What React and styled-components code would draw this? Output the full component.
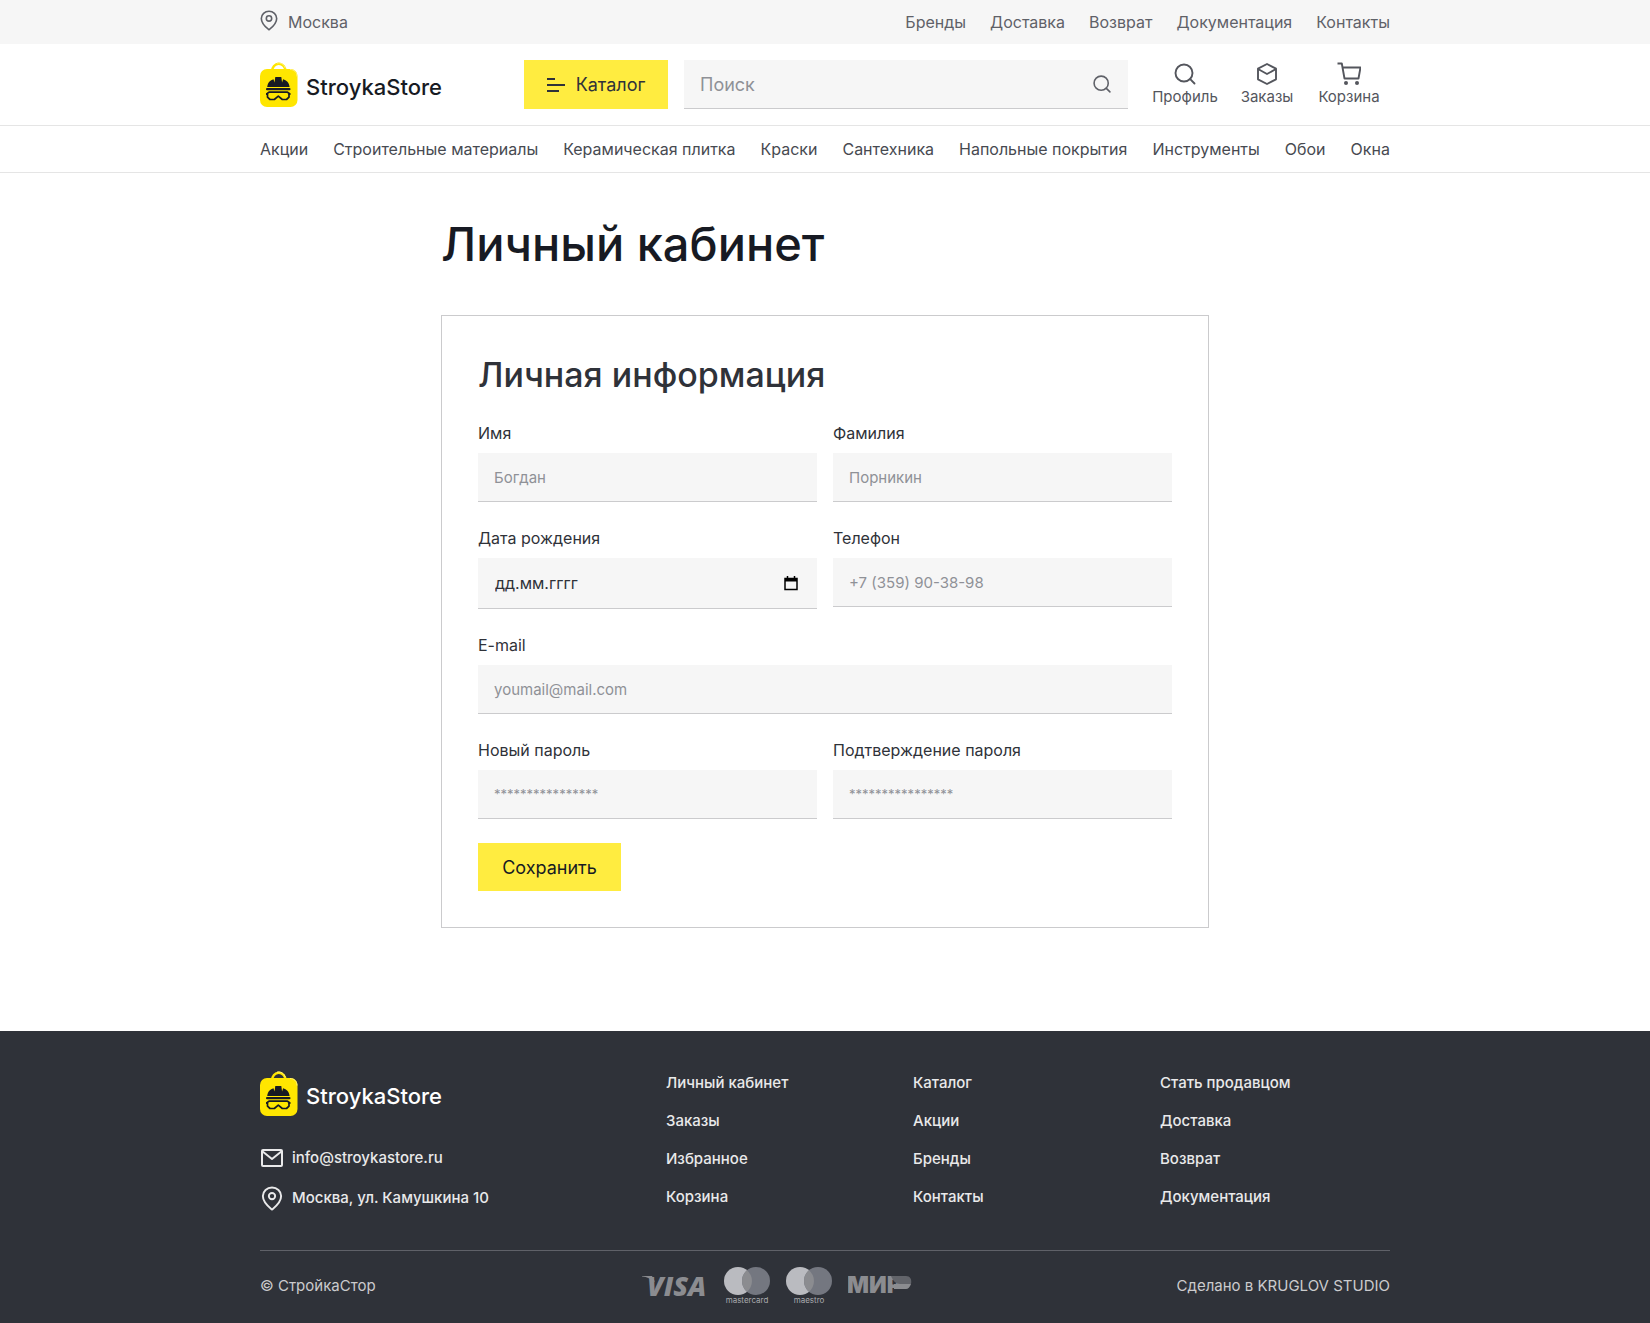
import React, { useState } from 'react';
import styled, { createGlobalStyle } from 'styled-components';

const topLinks = ['Бренды', 'Доставка', 'Возврат', 'Документация', 'Контакты'];

const categories = [
  'Акции',
  'Строительные материалы',
  'Керамическая плитка',
  'Краски',
  'Сантехника',
  'Напольные покрытия',
  'Инструменты',
  'Обои',
  'Окна',
];

const footerColumns = [
  ['Личный кабинет', 'Заказы', 'Избранное', 'Корзина'],
  ['Каталог', 'Акции', 'Бренды', 'Контакты'],
  ['Стать продавцом', 'Доставка', 'Возврат', 'Документация'],
];

const PinIcon = ({ width, height }) => (
  <svg width={width} height={height} viewBox="0 0 22 26" fill="none" stroke="currentColor" strokeWidth="2" strokeLinejoin="round">
    <path d="M11 24.500C8.500 22.500 1.500 17.500 1.500 10.500a9.500 9 0 0 1 19 0c0 7-7 12-9.500 14z" />
    <circle cx="11" cy="10.500" r="3.300" />
  </svg>
);

const SearchIcon = ({ size }) => (
  <svg width={size} height={size} viewBox="0 0 24 24" fill="none" stroke="currentColor" strokeWidth="1.900" strokeLinecap="round">
    <circle cx="11" cy="11" r="8.500" />
    <path d="M17.200 17.200L21.500 21.500" />
  </svg>
);

const BoxIcon = () => (
  <svg width="24" height="24" viewBox="0 0 24 24" fill="none" stroke="currentColor" strokeWidth="1.900" strokeLinejoin="round">
    <path d="M12 2l9 4.700v10.600L12 22l-9-4.700V6.700z" />
    <path d="M3 7l9 5 9-5" />
  </svg>
);

const CartIcon = () => (
  <svg width="24" height="24" viewBox="0 0 24 24" fill="none" stroke="currentColor" strokeWidth="1.900" strokeLinejoin="round">
    <path d="M.5 1.500h4.300l2.700 15h14l2-11H5.500" />
    <circle cx="9" cy="21" r="2" fill="currentColor" stroke="none" />
    <circle cx="20" cy="21" r="2" fill="currentColor" stroke="none" />
  </svg>
);

const MailIcon = () => (
  <svg width="24" height="24" viewBox="0 0 24 24" fill="none" stroke="currentColor" strokeWidth="2" strokeLinejoin="round">
    <rect x="2" y="4" width="20" height="16" rx="1" />
    <path d="M2 5l10 8 10-8" />
  </svg>
);

const MenuIcon = () => (
  <svg width="18" height="14" viewBox="0 0 18 14" fill="none" stroke="currentColor" strokeWidth="2">
    <path d="M0 1h8M0 7h18M0 13h12" />
  </svg>
);

const CalendarIcon = () => (
  <svg width="14" height="15" viewBox="0 0 14 15" fill="none" stroke="#000">
    <path d="M1 2.500h12v11H1z" strokeWidth="1.500" />
    <path d="M1 4h12" strokeWidth="3" />
    <path d="M3.500 0v3M10.500 0v3" strokeWidth="1.500" />
  </svg>
);

const BagIcon = () => (
  <svg width="38" height="45" viewBox="0 0 38 45" fill="none">
    <path d="M12 9.500a6.800 7.800 0 0 1 13.600 0" stroke="#ffe600" strokeWidth="2.500" />
    <path d="M17 1.200c4-1 7 1.300 8.300 5" stroke="#fff27a" strokeWidth="1" />
    <rect y="7" width="37.500" height="38" rx="7" fill="#ffe600" />
    <path d="M30 7.500c4 0 7 2.500 7 7" stroke="#fff27a" strokeWidth="1" />
    <path d="M7.200 25c.5-4.500 3-7 6.300-7.800l1 3.300.8-5.500h6l.8 5.500 1-3.300c3.300.8 6 3.300 6.500 7.800z" fill="#171a23" />
    <rect x="6" y="26" width="24.500" height="2.300" rx="1" fill="#171a23" />
    <path d="M9 30.200h18.500l1.500 1v4l-2.500 2.300h-4.200l-4-3.300-4 3.300H10l-2.500-2.300v-4z" stroke="#171a23" strokeWidth="1.700" strokeLinejoin="round" />
    <path d="M6 32h2M28.500 32h2" stroke="#171a23" strokeWidth="2" />
  </svg>
);

const VisaLogo = () => (
  <svg width="68" height="44" viewBox="-1 -11 68 44" fill="#8b8c90" role="img" aria-label="Visa">
    <path d="M1 1h10l3 6C10 3.500 6 2 1 1.500z" />
    <text x="6" y="21" fontFamily="'Open Sans', sans-serif" fontSize="27" fontWeight="800" fontStyle="italic">VISA</text>
  </svg>
);

const MirLogo = () => (
  <svg width="64" height="38" viewBox="0 -9 64 38" fill="#8b8c90" role="img" aria-label="Мир">
    <text x="-1" y="17" fontFamily="Inter, sans-serif" fontSize="23" fontWeight="900">МИР</text>
    <path d="M43 0h15c4 0 6 3 5 8H52c-4 0-7-3-9-8z" fill="#62646a" />
    <path d="M46 8h17c-1 3-3 5-5 5H46z" />
  </svg>
);

const CirclesLogo = ({ name }) => (
  <svg width="46" height="38" viewBox="0 0 46 38">
    <circle cx="14" cy="14" r="14" fill="#babbc0" />
    <circle cx="32" cy="14" r="14" fill="#747780" />
    <path d="M23 3.300a14 14 0 0 1 0 21.400a14 14 0 0 1 0-21.400z" fill="#8b8c90" />
    <text x="23" y="36" textAnchor="middle" fontFamily="Inter, sans-serif" fontSize="8" fill="#a9aaae">{name}</text>
  </svg>
);

const Brand = ({ light }) => (
  <BrandLink href="#" $light={light}>
    <BagIcon />
    <span>StroykaStore</span>
  </BrandLink>
);

const Field = ({ id, label, wide, ...rest }) => (
  <FieldBox $wide={wide}>
    <FieldLabel htmlFor={id}>{label}</FieldLabel>
    <FieldInput id={id} {...rest} />
  </FieldBox>
);

const DateField = ({ id, label }) => {
  const [picking, setPicking] = useState(false);

  // shows the russian mask until the native picker is needed
  return (
    <FieldBox>
      <FieldLabel htmlFor={id}>{label}</FieldLabel>
      <DateBox>
        <DateInput
          id={id}
          type={picking ? 'date' : 'text'}
          placeholder="дд.мм.гггг"
          onFocus={() => setPicking(true)}
          onBlur={(event) => setPicking(Boolean(event.target.value))}
        />
        {!picking && (
          <IconButton type="button" aria-label="Открыть календарь" onClick={() => setPicking(true)}>
            <CalendarIcon />
          </IconButton>
        )}
      </DateBox>
    </FieldBox>
  );
};

const Header = () => (
  <header>
    <TopBar>
      <TopInner>
        <City href="#">
          <PinIcon width={18} height={21} />
          <span>Москва</span>
        </City>
        <TopNav>
          {topLinks.map((item) => (
            <a href="#" key={item}>{item}</a>
          ))}
        </TopNav>
      </TopInner>
    </TopBar>
    <MainBar>
      <MainInner>
        <BrandCell>
          <Brand />
        </BrandCell>
        <CatalogButton type="button">
          <MenuIcon />
          Каталог
        </CatalogButton>
        <SearchForm onSubmit={(event) => event.preventDefault()}>
          <SearchInput type="search" aria-label="Поиск" placeholder="Поиск" />
          <IconButton type="submit" aria-label="Найти">
            <SearchIcon size={20} />
          </IconButton>
        </SearchForm>
        <Actions>
          <Action href="#">
            <SearchIcon size={24} />
            Профиль
          </Action>
          <Action href="#">
            <BoxIcon />
            Заказы
          </Action>
          <Action href="#">
            <CartIcon />
            Корзина
          </Action>
        </Actions>
      </MainInner>
    </MainBar>
    <CategoryBar>
      <CategoryNav>
        {categories.map((item) => (
          <a href="#" key={item}>{item}</a>
        ))}
      </CategoryNav>
    </CategoryBar>
  </header>
);

const Footer = () => (
  <FooterBox>
    <FooterTop>
      <div>
        <Brand light />
        <Contacts>
          <a href="mailto:info@stroykastore.ru">
            <MailIcon />
            info@stroykastore.ru
          </a>
          <a href="#">
            <PinIcon width={24} height={25} />
            Москва, ул. Камушкина 10
          </a>
        </Contacts>
      </div>
      {footerColumns.map((column) => (
        <FooterNav key={column[0]}>
          {column.map((item) => (
            <a href="#" key={item}>{item}</a>
          ))}
        </FooterNav>
      ))}
    </FooterTop>
    <FooterBottom>
      <span>© СтройкаСтор</span>
      <Payments>
        <VisaLogo />
        <CirclesLogo name="mastercard" />
        <CirclesLogo name="maestro" />
        <MirLogo />
      </Payments>
      <span>Сделано в KRUGLOV STUDIO</span>
    </FooterBottom>
  </FooterBox>
);

const App = () => (
  <>
    <GlobalStyle />
    <Page>
      <Header />
      <Main>
        <Title>Личный кабинет</Title>
        <Card onSubmit={(event) => event.preventDefault()}>
          <CardTitle>Личная информация</CardTitle>
          <Fields>
            <Field id="firstName" label="Имя" type="text" placeholder="Богдан" />
            <Field id="lastName" label="Фамилия" type="text" placeholder="Порникин" />
            <DateField id="birthday" label="Дата рождения" />
            <Field id="phone" label="Телефон" type="tel" placeholder="+7 (359) 90-38-98" />
            <Field id="email" label="E-mail" type="email" placeholder="youmail@mail.com" wide />
            <Field id="password" label="Новый пароль" type="password" placeholder="****************" />
            <Field id="confirm" label="Подтверждение пароля" type="password" placeholder="****************" />
          </Fields>
          <SaveButton type="submit">Сохранить</SaveButton>
        </Card>
      </Main>
      <Footer />
    </Page>
  </>
);

const GlobalStyle = createGlobalStyle`
  * {
    box-sizing: border-box;
  }

  body {
    margin: 0;
    background: #fff;
    color: #2f3239;
    font-family: Inter, 'Noto Sans', sans-serif;
    font-size: 16px;
    line-height: 24px;
  }

  a {
    color: inherit;
    text-decoration: none;
  }

  button,
  input {
    font-family: inherit;
  }

  svg {
    display: block;
    flex-shrink: 0;
  }
`;

const Page = styled.div`
  display: flex;
  flex-direction: column;
  min-height: 100vh;
`;

const Container = styled.div`
  width: 100%;
  max-width: 1162px;
  margin: 0 auto;
  padding: 0 16px;
`;

const TopBar = styled.div`
  background: #f6f6f6;
  color: #5f6168;
`;

const TopInner = styled(Container)`
  display: flex;
  justify-content: space-between;
  align-items: center;
  height: 44px;
`;

const City = styled.a`
  display: flex;
  gap: 10px;
`;

const TopNav = styled.nav`
  display: flex;
  gap: 24px;
`;

const MainBar = styled.div`
  border-bottom: 1px solid #e5e5e5;
`;

const MainInner = styled(Container)`
  display: flex;
  padding-top: 16px;
  padding-bottom: 16px;
`;

const BrandCell = styled.div`
  display: flex;
  align-items: center;
  width: 264px;
`;

const BrandLink = styled.a`
  display: flex;
  align-items: center;
  gap: 8px;
  color: ${(props) => (props.$light ? '#fff' : '#171a23')};
  font-size: 22px;
  font-weight: 500;

  span {
    padding-top: 5px;
  }
`;

const CatalogButton = styled.button`
  display: flex;
  align-items: center;
  justify-content: center;
  gap: 11px;
  width: 144px;
  height: 49px;
  margin-right: 16px;
  border: none;
  background: #ffec40;
  color: #2f3239;
  font-size: 18px;
`;

const SearchForm = styled.form`
  display: flex;
  flex: 1;
  align-items: center;
  height: 49px;
  margin-right: 16px;
  padding: 0 16px;
  border-bottom: 1px solid #cbcbcd;
  background: #f6f6f6;
  color: #5f6168;
`;

const SearchInput = styled.input`
  flex: 1;
  min-width: 0;
  padding: 0;
  border: none;
  outline: none;
  background: none;
  font-size: 18px;

  &::placeholder {
    color: #8f9197;
    opacity: 1;
  }
`;

const IconButton = styled.button`
  padding: 0;
  border: none;
  background: none;
  color: inherit;
`;

const Actions = styled.nav`
  display: grid;
  grid-template-columns: repeat(3, 82px);
`;

const Action = styled.a`
  display: flex;
  flex-direction: column;
  align-items: center;
  padding-top: 2px;
  color: #54565d;
  font-size: 15px;
  line-height: 22px;
`;

const CategoryBar = styled.div`
  border-bottom: 1px solid #e5e5e5;
  color: #474a51;
`;

const CategoryNav = styled(Container).attrs({ as: 'nav' })`
  display: flex;
  justify-content: space-between;
  align-items: center;
  height: 46px;
`;

const Main = styled.main`
  flex: 1;
  width: 100%;
  max-width: 800px;
  margin: 0 auto;
  padding: 38px 16px 103px;
`;

const Title = styled.h1`
  margin: 0 0 38px;
  color: #171a23;
  font-size: 47px;
  font-weight: 500;
  line-height: 66px;
`;

const Card = styled.form`
  padding: 36px;
  border: 1px solid #cbcbcd;
`;

const CardTitle = styled.h2`
  margin: 0 0 24px;
  font-size: 34px;
  font-weight: 500;
  line-height: 45px;
`;

const Fields = styled.div`
  display: grid;
  grid-template-columns: 1fr 1fr;
  align-items: start;
  gap: 24px 16px;
  margin-bottom: 24px;
`;

const FieldBox = styled.div`
  grid-column: ${(props) => (props.$wide ? '1 / -1' : 'auto')};
`;

const FieldLabel = styled.label`
  display: block;
  margin-bottom: 8px;
`;

const FieldInput = styled.input`
  display: block;
  width: 100%;
  height: 49px;
  padding: 0 16px;
  border: none;
  border-bottom: 1px solid #cbcbcd;
  border-radius: 0;
  outline: none;
  background: #f6f6f6;
  font-size: 15px;

  &[type='password'] {
    font-size: 13px;
  }

  &::placeholder {
    color: #8f9197;
    opacity: 1;
  }
`;

const DateBox = styled.div`
  display: flex;
  align-items: center;
  height: 51px;
  padding-right: 19px;
  border-bottom: 1px solid #cbcbcd;
  background: #f6f6f6;
`;

const DateInput = styled(FieldInput)`
  flex: 1;
  padding: 0 0 0 17px;
  border: none;
  font-size: 16px;

  &::placeholder {
    color: #2f3239;
  }
`;

const SaveButton = styled.button`
  display: block;
  width: 143px;
  height: 48px;
  border: none;
  background: #ffec40;
  color: #171a23;
  font-size: 18px;
`;

const FooterBox = styled.footer`
  background: #2f3239;
  color: #e9e9ea;
  font-size: 15px;
`;

const FooterTop = styled(Container)`
  display: grid;
  grid-template-columns: 1fr 247px 247px 230px;
  padding-top: 40px;
  padding-bottom: 40px;
  font-weight: 500;
`;

const Contacts = styled.div`
  display: flex;
  flex-direction: column;
  gap: 16px;
  margin-top: 30px;

  a {
    display: flex;
    align-items: center;
    gap: 8px;
    height: 24px;
  }
`;

const FooterNav = styled.nav`
  display: flex;
  flex-direction: column;
  gap: 14px;
`;

const FooterBottom = styled.div`
  display: flex;
  justify-content: space-between;
  align-items: center;
  width: calc(100% - 32px);
  max-width: 1130px;
  height: 73px;
  margin: 0 auto;
  padding-bottom: 2px;
  border-top: 1px solid #5f6168;
  color: #cbcbcd;
`;

const Payments = styled.div`
  display: flex;
  align-items: center;
  gap: 16px;
`;

export default App;
